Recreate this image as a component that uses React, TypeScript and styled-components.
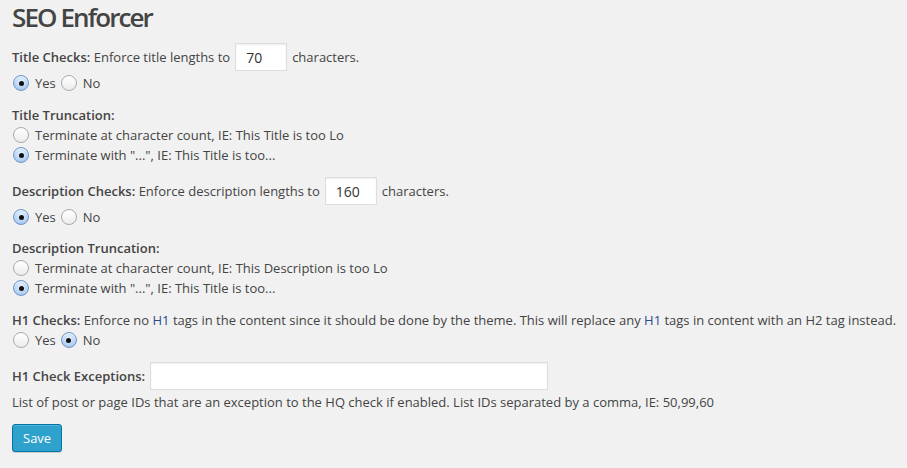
import React from 'react';
import styled, { createGlobalStyle } from 'styled-components';

const GlobalStyle = createGlobalStyle`
  html, body {
    margin: 0;
    padding: 0;
    background: #f1f1f1;
  }
`;

const Wrap = styled.div`
  min-height: 100vh;
  padding: 0 12px;
  background: #f1f1f1;
  color: #444;
  font-family: "Open Sans", "Liberation Sans", sans-serif;
  font-size: 13px;
  line-height: 20px;
`;

const Title = styled.h2`
  margin: 0;
  padding: 2px 0 0;
  font-size: 26px;
  line-height: 30px;
  font-weight: 600;
  letter-spacing: -1.9px;
  color: #444;
`;

const Section = styled.div<{ $top: number }>`
  margin-top: ${({ $top }) => $top}px;
`;

const FieldRow = styled.div`
  display: flex;
  align-items: center;
  min-height: 30px;
  gap: 5px;
`;

const Label = styled.span`
  font-weight: 600;
`;

const Line = styled.div`
  height: 20px;
  display: flex;
  align-items: center;
  white-space: nowrap;
`;

const NumberInput = styled.input`
  box-sizing: border-box;
  width: 52px;
  height: 28px;
  margin: 0;
  padding: 0 10px;
  border: 1px solid #ddd;
  background: #fff;
  box-shadow: inset 0 1px 2px rgba(0, 0, 0, 0.07);
  font-family: inherit;
  font-size: 14px;
  color: #333;
  outline: none;
`;

const WideInput = styled(NumberInput)`
  width: 398px;
`;

const RadioRow = styled.div<{ $height?: number }>`
  display: flex;
  align-items: center;
  height: ${({ $height }) => $height ?? 20}px;
`;

const Choice = styled.label`
  display: inline-flex;
  align-items: center;
  margin-right: 4px;
  cursor: pointer;
`;

const Radio = styled.input.attrs({ type: 'radio' })`
  appearance: none;
  -webkit-appearance: none;
  box-sizing: border-box;
  width: 16px;
  height: 16px;
  margin: 0 6px 0 1px;
  border-radius: 50%;
  border: 1px solid #a9a9a9;
  background: linear-gradient(#ffffff, #ececec);
  box-shadow: inset 0 1px 1px rgba(255, 255, 255, 0.8);
  display: inline-grid;
  place-content: center;

  &:checked {
    border-color: #6f95c6;
    background: radial-gradient(circle at 50% 35%, #e6f1fd 0%, #b5d3f4 60%, #8fb8e8 100%);
  }

  &:checked::before {
    content: '';
    width: 5px;
    height: 5px;
    border-radius: 50%;
    background: #111;
  }
`;

const Tag = styled.span`
  color: #2a4b8d;
`;

const Help = styled.p`
  margin: 1px 0 0;
`;

const SaveButton = styled.button`
  box-sizing: border-box;
  height: 28px;
  margin-top: 12px;
  padding: 0 10px 1px;
  border: 1px solid #0074a2;
  border-radius: 3px;
  background: #2ea2cc;
  box-shadow: inset 0 1px 0 rgba(120, 200, 230, 0.5), 0 1px 0 rgba(0, 0, 0, 0.15);
  color: #fff;
  font-family: inherit;
  font-size: 13px;
  cursor: pointer;
`;

type Opt = { label: string; checked: boolean };

const RadioGroup: React.FC<{ name: string; options: Opt[]; stacked?: boolean; height?: number }> = ({
  name,
  options,
  stacked,
  height,
}) => {
  if (stacked) {
    return (
      <>
        {options.map((o) => (
          <RadioRow key={o.label}>
            <Choice>
              <Radio name={name} defaultChecked={o.checked} />
              {o.label}
            </Choice>
          </RadioRow>
        ))}
      </>
    );
  }
  return (
    <RadioRow $height={height}>
      {options.map((o) => (
        <Choice key={o.label}>
          <Radio name={name} defaultChecked={o.checked} />
          {o.label}
        </Choice>
      ))}
    </RadioRow>
  );
};

const yesNo = (yes: boolean): Opt[] => [
  { label: 'Yes', checked: yes },
  { label: 'No', checked: !yes },
];

const App: React.FC = () => {
  return (
    <Wrap>
      <GlobalStyle />
      <Title>SEO Enforcer</Title>

      <Section $top={10}>
        <FieldRow>
          <span>
            <Label>Title Checks:</Label> Enforce title lengths to
          </span>
          <NumberInput defaultValue="70" />
          <span>characters.</span>
        </FieldRow>
        <RadioGroup name="title-check" options={yesNo(true)} height={22} />
      </Section>

      <Section $top={11}>
        <Line>
          <Label>Title Truncation:</Label>
        </Line>
        <RadioGroup
          name="title-trunc"
          stacked
          options={[
            { label: 'Terminate at character count, IE: This Title is too Lo', checked: false },
            { label: 'Terminate with "...", IE: This Title is too...', checked: true },
          ]}
        />
      </Section>

      <Section $top={11}>
        <FieldRow>
          <span>
            <Label>Description Checks:</Label> Enforce description lengths to
          </span>
          <NumberInput defaultValue="160" />
          <span>characters.</span>
        </FieldRow>
        <RadioGroup name="desc-check" options={yesNo(true)} height={22} />
      </Section>

      <Section $top={10}>
        <Line>
          <Label>Description Truncation:</Label>
        </Line>
        <RadioGroup
          name="desc-trunc"
          stacked
          options={[
            { label: 'Terminate at character count, IE: This Description is too Lo', checked: false },
            { label: 'Terminate with "...", IE: This Title is too...', checked: true },
          ]}
        />
      </Section>

      <Section $top={12}>
        <Line>
          <span>
            <Label>H1 Checks:</Label> Enforce no <Tag>H1</Tag> tags in the content since it should be done by
            the theme. This will replace any <Tag>H1</Tag> tags in content with an H2 tag instead.
          </span>
        </Line>
        <RadioGroup name="h1-check" options={yesNo(false)} />
      </Section>

      <Section $top={11}>
        <FieldRow>
          <Label>H1 Check Exceptions:</Label>
          <WideInput />
        </FieldRow>
        <Help>
          List of post or page IDs that are an exception to the HQ check if enabled. List IDs separated by a
          comma, IE: 50,99,60
        </Help>
        <SaveButton>Save</SaveButton>
      </Section>
    </Wrap>
  );
};

export default App;
